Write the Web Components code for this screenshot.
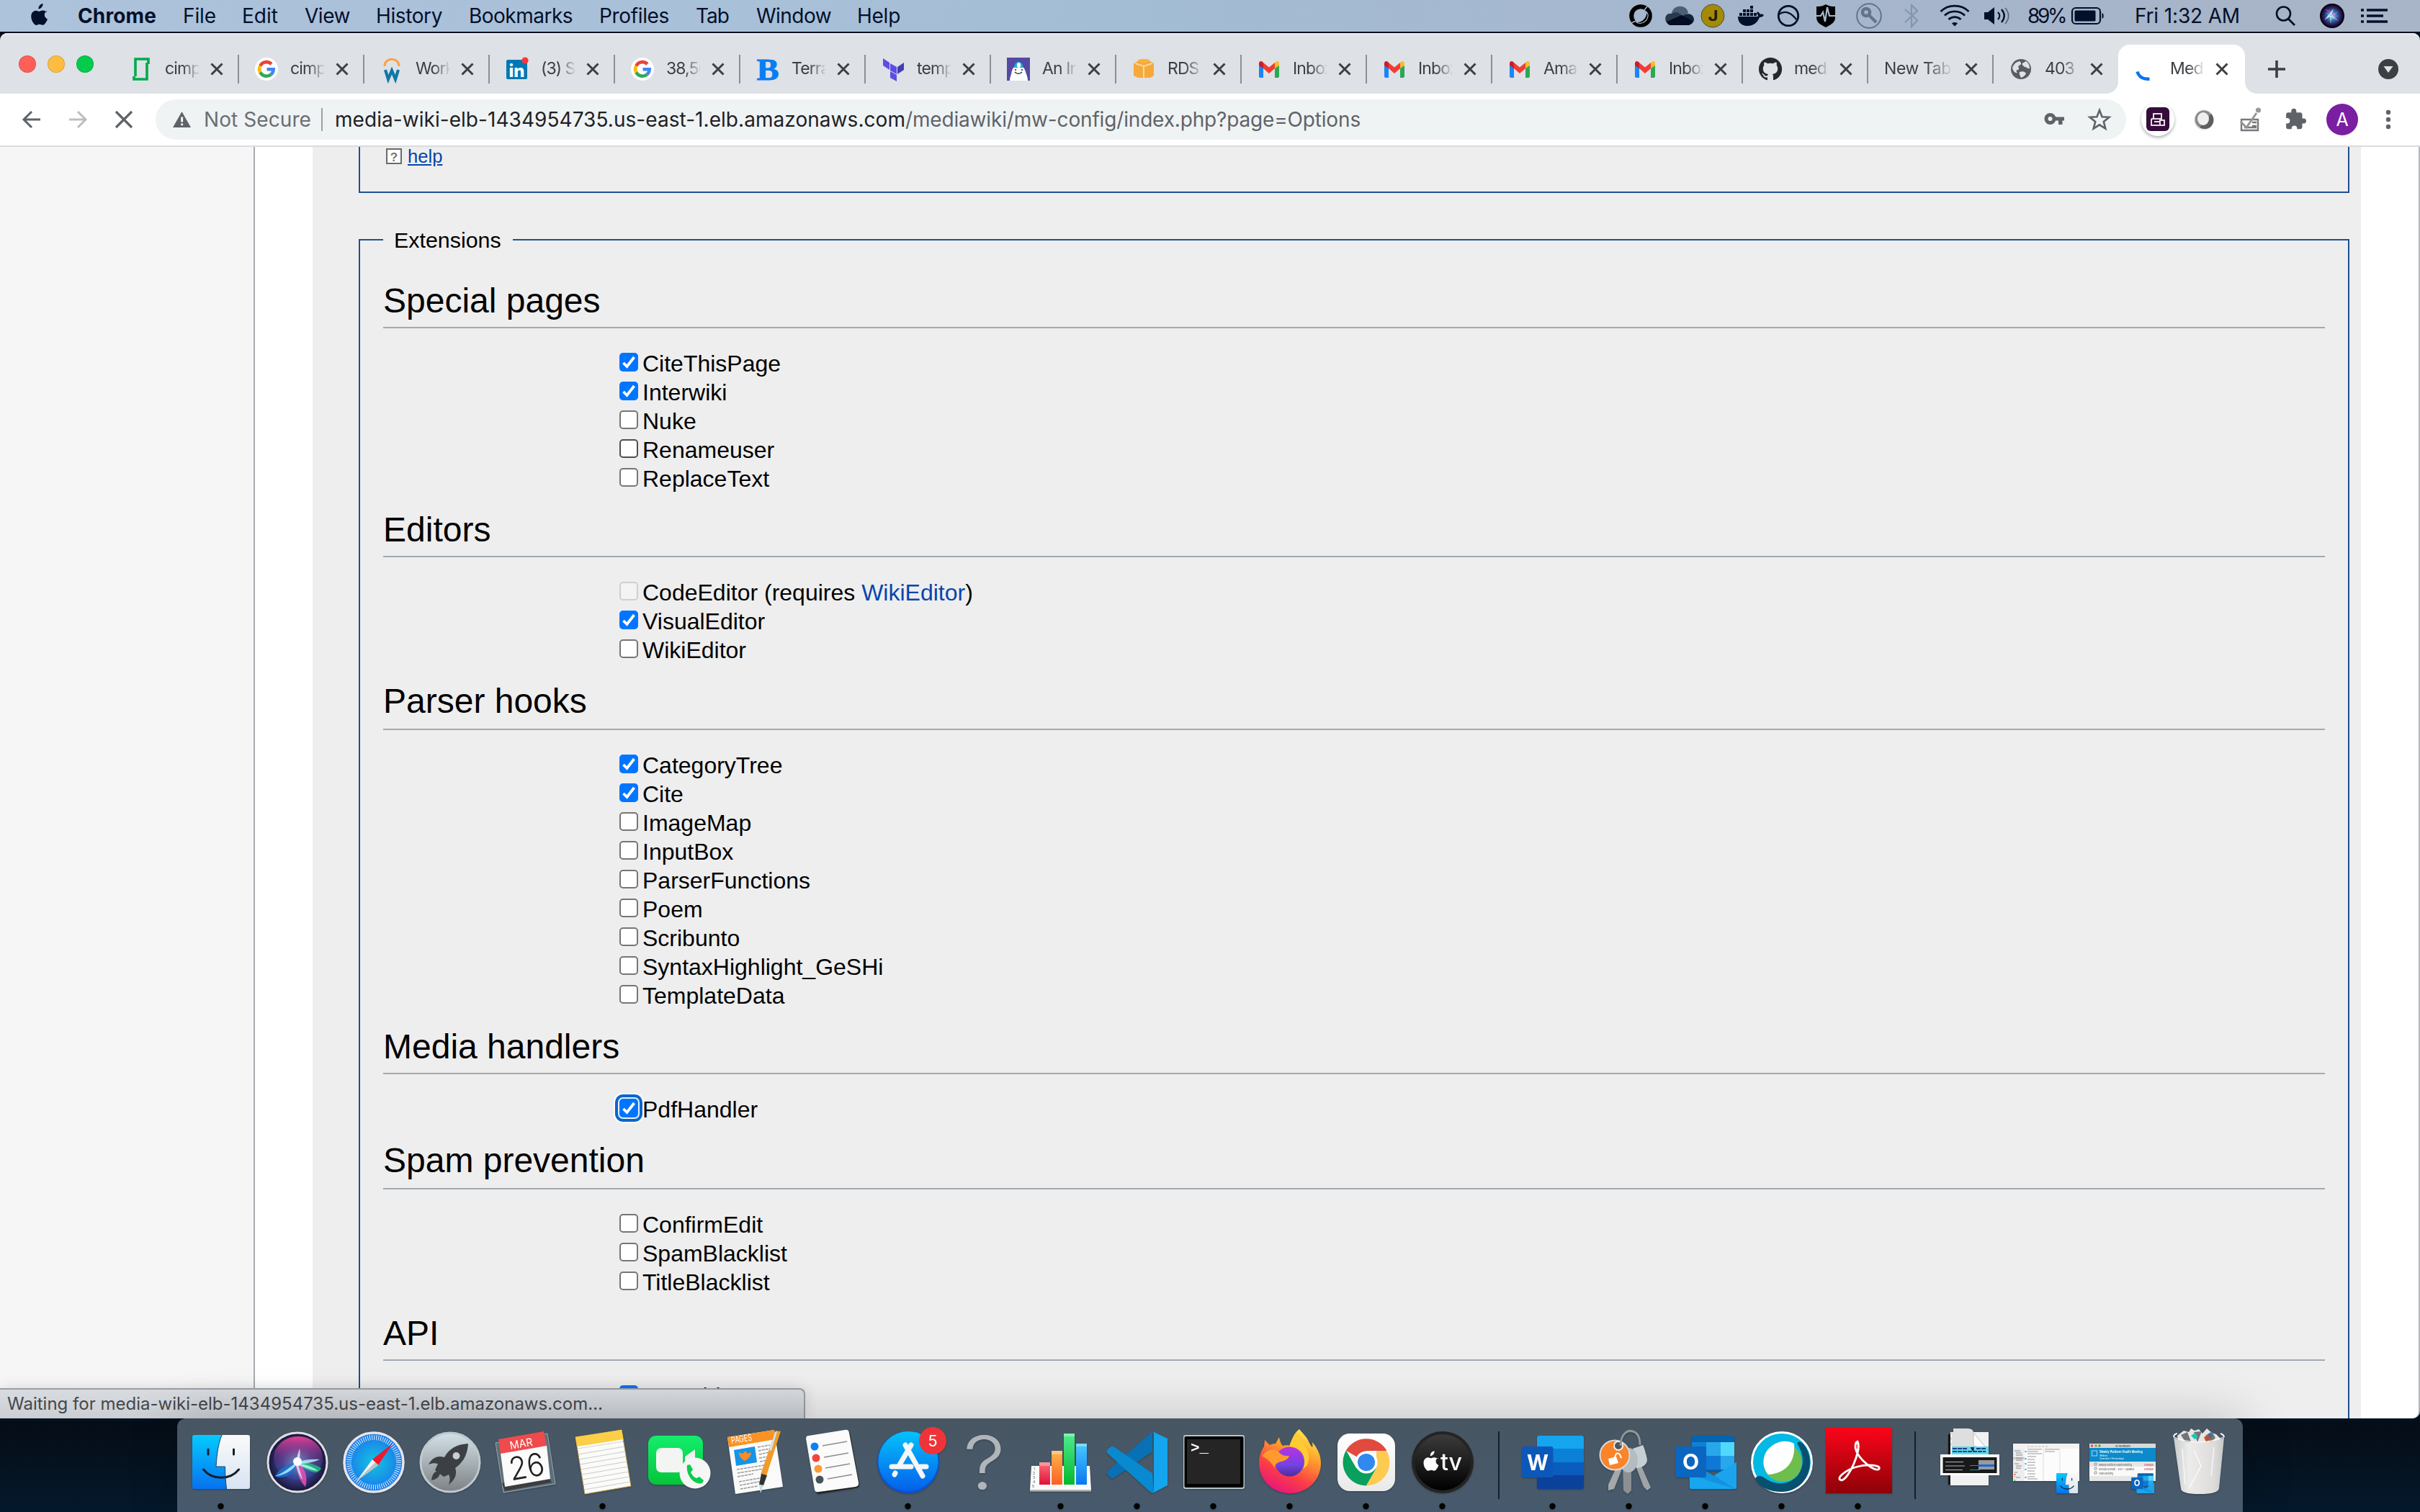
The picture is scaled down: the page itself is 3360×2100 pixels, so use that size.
<!DOCTYPE html>
<html lang="en">
<head>
<meta charset="utf-8">
<title>MediaWiki installation</title>
<style>
html,body{margin:0;padding:0;width:3360px;height:2100px;overflow:hidden;background:#04121f}
body{font-family:Inter,"Liberation Sans",sans-serif}
</style>
</head>
<body>
<mac-desktop></mac-desktop>
<script>
function define(name, html, setup){
  const t=document.createElement('template');t.innerHTML=html;
  customElements.define(name,class extends HTMLElement{
    connectedCallback(){
      if(this.shadowRoot)return;
      this.attachShadow({mode:'open'});
      this.shadowRoot.appendChild(t.content.cloneNode(true));
      if(setup)setup(this,this.shadowRoot);
    }
  });
}

/* Text set to an exact advance width through letter-spacing */
define('fit-text',`<style>:host{display:inline-block;white-space:pre}span{display:inline-block}</style><span><slot></slot></span>`,
  (h,r)=>{
    const w=+h.getAttribute('w');if(!w)return;
    const s=r.querySelector('span'),n=h.textContent.length;
    const nat=s.getBoundingClientRect().width;
    s.style.letterSpacing=((w-nat)/n)+'px';
  });

/* ---------- Menu bar ---------- */
define('mac-menubar',`<style>
:host{display:flex;height:44px;align-items:center;color:#03102a;font:400 28px/44px Inter,"Liberation Sans",sans-serif;
background:linear-gradient(90deg,#adc2db 0,#a9c0d9 30%,#a2bdd4 46%,#a5b9d0 60%,#a6b5cb 80%,#a8b4c7 100%);box-sizing:border-box}
b{font-weight:700}
svg{display:block;flex:none}
.m{display:flex}.m>*{flex:none}
.r{display:flex;margin-left:auto;align-items:center;height:44px}
</style>
<svg width="30" height="34" viewBox="0 0 30 34" style="margin-left:40px;margin-top:-4px"><path fill="#03102a" d="M19.6 2c.2 2-.6 3.800-1.700 5.100-1.100 1.400-2.900 2.400-4.500 2.300-.2-1.900.7-3.800 1.700-5C16.200 3 18.100 2.100 19.600 2zM25 12.200c-2 1.200-3.200 2.900-3.200 5.300 0 2.700 1.600 4.900 4.200 5.900-.6 1.900-1.500 3.600-2.600 5.200-1.100 1.600-2.300 3.200-4.100 3.200-1.800.1-2.400-1-4.500-1-2.100 0-2.700 1-4.500 1.100-1.700.1-3.100-1.700-4.200-3.300-2.300-3.300-4.100-9.400-1.700-13.500 1.200-2 3.300-3.300 5.500-3.400 1.800 0 3.400 1.200 4.500 1.200 1 0 3-1.500 5.200-1.300 2.200.1 4.100.9 5.400 2.600z"/></svg>
<div class="m">
<b style="margin-left:38px"><fit-text w="109">Chrome</fit-text></b>
<fit-text w="46" style="margin-left:37px">File</fit-text>
<fit-text w="50" style="margin-left:36px">Edit</fit-text>
<fit-text w="63" style="margin-left:37px">View</fit-text>
<fit-text w="92" style="margin-left:36px">History</fit-text>
<fit-text w="144" style="margin-left:37px">Bookmarks</fit-text>
<fit-text w="97" style="margin-left:37px">Profiles</fit-text>
<fit-text w="46" style="margin-left:37px">Tab</fit-text>
<fit-text w="104" style="margin-left:38px">Window</fit-text>
<fit-text w="60" style="margin-left:36px">Help</fit-text>
</div>
<div class="r">
<svg width="32" height="32" viewBox="0 0 32 32"><circle cx="16" cy="16" r="12.800" fill="none" stroke="#000" stroke-width="6"/><path d="M3 26l6-3M21 8l4-5" stroke="#a6b8ce" stroke-width="1.500"/><path d="M9 24c8 2 15-5 15-14l2 4c1 8-7 14-14 12z" fill="#000" stroke="#a6b8ce" stroke-width="1.200"/></svg>
<svg width="40" height="28" viewBox="0 0 40 28" style="margin-left:18px"><path d="M9 12C9-2 30-3 32 10l-13 7z" fill="#4c6073"/><path d="M8 27C-3 25-2 9 9 11c3-2 6-3 9-1l20 11c-2 4-4 6-8 6z" fill="#29394c"/><path d="M24 15c3-5 15-6 16 4 0 4-4 8-9 8z" fill="#12263a"/><path d="M2 22l21-9 15 8c-1 4-4 6-8 6H8c-3 0-5-2-6-5z" fill="#020c22"/></svg>
<svg width="34" height="34" viewBox="0 0 34 34" style="margin-left:9px"><circle cx="17" cy="17" r="16" fill="#a38a08" stroke="#50502c"/><text x="17.500" y="24" font-size="20" font-weight="700" text-anchor="middle" textLength="14" lengthAdjust="spacingAndGlyphs" fill="#201c0c">J</text></svg>
<svg width="38" height="30" viewBox="0 0 38 30" style="margin-left:17px"><path fill="#03102a" d="M1 16h27c1 0 1-1 1-2-2-1-2-3-1-5 2 1 3 2 4 4 2-1 4 0 5 1-1 2-3 3-6 3-3 8-9 12-17 12C6 29 1 24 1 16zM3 11h4v4H3zM8 11h4v4H8zM13 11h4v4h-4zM18 11h4v4h-4zM23 11h4v4h-4zM8 6h4v4H8zM13 6h4v4h-4zM18 6h4v4h-4zM18 1h4v4h-4z"/></svg>
<svg width="32" height="32" viewBox="0 0 32 32" style="margin-left:17px"><circle cx="16" cy="16" r="13.700" fill="none" stroke="#03102a" stroke-width="2.800"/><path d="M3 14c9-7 18-1 24 7" fill="none" stroke="#03102a" stroke-width="2.200"/></svg>
<svg width="28" height="34" viewBox="0 0 28 34" style="margin-left:22px"><path d="M14 1c5 3 9 3 13 3v15c0 7-5 10-13 14C6 29 1 26 1 19V4c4 0 8 0 13-3z" fill="#000"/><path d="M0 17h7l3-5 3 13 3-20 3 12h9" fill="none" stroke="#a6b7cc" stroke-width="2.200"/></svg>
<svg width="36" height="36" viewBox="0 0 36 36" style="margin-left:28px"><g fill="none" stroke="#62758b"><circle cx="18" cy="18" r="16.800" stroke-width="2"/><circle cx="14" cy="13" r="5" stroke-width="4.500"/><path d="M17 16l11 11" stroke-width="4"/></g></svg>
<svg width="20" height="34" viewBox="0 0 20 34" style="margin-left:31px"><path d="M1 8l17 15-8 9V2l8 8L1 26" fill="none" stroke="#8496ab" stroke-width="2.200"/></svg>
<svg width="42" height="32" viewBox="0 0 42 32" style="margin-left:29px"><g fill="none" stroke="#03102a" stroke-width="2.900"><path d="M1.500 10C12-.5 30-.5 40.500 10"/><path d="M7 15.500c7.500-7.500 20.500-7.500 28 0"/><path d="M12.500 21c5-4.500 12-4.500 17 0"/></g><path d="M17 26.500c2-2 6-2 8 0l-4 4z" fill="#03102a"/></svg>
<svg width="36" height="30" viewBox="0 0 36 30" style="margin-left:19px"><path d="M1 10h5l9-7v24l-9-7H1z" fill="#03102a"/><path d="M20 10c3 3 3 7 0 10M25 6c5 6 5 12 0 18" fill="none" stroke="#03102a" stroke-width="2.300"/><path d="M30 4c6 7 6 15 0 22" fill="none" stroke="#5a6b83" stroke-width="1.800"/></svg>
<fit-text w="52" style="margin-left:25px">89%</fit-text>
<svg width="48" height="26" viewBox="0 0 48 26" style="margin-left:8px"><rect x="2" y="2" width="39" height="22" rx="5" fill="none" stroke="#03102a" stroke-width="2.200"/><rect x="5.500" y="5.500" width="29" height="15" rx="1.500" fill="#03102a"/><path d="M43.500 9c3 1 3 7 0 8z" fill="#03102a"/></svg>
<fit-text w="146" style="margin-left:41px">Fri 1:32 AM</fit-text>
<svg width="30" height="30" viewBox="0 0 30 30" style="margin-left:48px"><circle cx="12.500" cy="12" r="9.500" fill="none" stroke="#03102a" stroke-width="2.600"/><path d="M19 19l9 9" stroke="#03102a" stroke-width="2.800"/></svg>
<svg width="34" height="34" viewBox="0 0 34 34" style="margin-left:33px"><defs><radialGradient id="s"><stop offset="0" stop-color="#e9fbff"/><stop offset=".35" stop-color="#3487b5"/><stop offset=".7" stop-color="#33226b"/><stop offset="1" stop-color="#07071f"/></radialGradient></defs><circle cx="17" cy="17" r="16" fill="url(#s)" stroke="#03030f" stroke-width="2"/><path d="M7 8c8 1 12 5 18 10-4 1-8 0-10-4zM8 26c6-2 9-8 8-18 5 6 4 13-8 18z" fill="#ca4fc4" opacity=".65"/><path d="M6 23l21-13-10 7 10 8-11-7-1 11-1-13-7-4 9 4 3-9z" fill="#bff" opacity=".85"/></svg>
<svg width="40" height="24" viewBox="0 0 40 24" style="margin:0 43px 0 22px"><path d="M9 4h29M9 12h23M9 20h29M1 4h4M1 12h4M1 20h4" stroke="#03102a" stroke-width="3.600"/></svg>
</div>`);

/* ---------- Favicons ---------- */
const gmail='<path d="M2 26V10l6 4v14H4c-1 0-2-1-2-2z" fill="#1a86f8"/><path d="M24 28V14l6-4v16c0 1-1 2-2 2z" fill="#29a952"/><path d="M2 11V8c0-3 3-4 5-2l1 1v8z" fill="#cc1d26"/><path d="M24 7l1-1c2-2 5-1 5 2v3l-6 4z" fill="#fdbb2c"/><path d="M8 7l8 6.500L24 7v8l-8 7-8-7z" fill="#f33b34"/>';
const google='<circle cx="16" cy="16" r="16" fill="#fff"/><g fill="none" stroke-width="4.600"><path d="M7.300 11.500A9.800 9.800 0 0 1 22.900 9" stroke="#ea4335"/><path d="M7.300 11.500a9.800 9.800 0 0 0 0 9" stroke="#fbbc05"/><path d="M7.300 20.500A9.800 9.800 0 0 0 22.500 23.300" stroke="#34a853"/><path d="M16.500 16.300h9.200a9.800 9.800 0 0 1-3.200 7" stroke="#4285f4"/></g>';
const fav={
 j:'<path d="M8 26V2h18v7M24 7v23H6v-4" fill="none" stroke="#00ab4b" stroke-width="3.600"/>',
 google,
 w:'<path d="M6 12C6-1 26-1 26 12" fill="none" stroke="#ffa040" stroke-width="3"/><path d="M7 17l4 13 5-12 5 12 4-13" fill="none" stroke="#1077a8" stroke-width="4.200"/>',
 in:'<rect x="1" y="3" width="29" height="27" rx="2" fill="#0077b5"/><text x="15.500" y="26.500" font-size="24" font-weight="800" text-anchor="middle" textLength="22" lengthAdjust="spacingAndGlyphs" fill="#fff">in</text><circle cx="27" cy="4" r="4.600" fill="#f5393d"/>',
 b:'<text x="16" y="31" font-size="43" font-family="Liberation Serif,serif" font-weight="700" text-anchor="middle" textLength="31" lengthAdjust="spacingAndGlyphs" fill="#0a7df2" stroke="#0a7df2">B</text>',
 tf:'<path d="M2 1l9 6v10l-9-6z" fill="#5c4ee5"/><path d="M12 8l9 5v10l-9-5z" fill="#5c4ee5"/><path d="M22 13l9-6v10l-9 6z" fill="#4040b2"/><path d="M12 19l9 5v9l-9-5z" fill="#5c4ee5"/>',
 an:'<path d="M0 0h32v32H0z" fill="#5549a5"/><path d="M16 11c-8 0-9 7-10 12-1 3-2 5-2 9h25c0-4-1-6-2-9-2-6-3-12-11-12z" fill="#fff"/><path d="M10 14c1-11 11-11 13 0z" fill="#18aee0"/><ellipse cx="16.500" cy="10.500" rx="2.600" ry="3.500" fill="#fff"/><circle cx="12" cy="17" r="1" fill="#222"/><circle cx="21" cy="17" r="1" fill="#222"/><path d="M11 20c3 3 7 3 10 0" fill="none" stroke="#222" stroke-width="1.300"/>',
 rds:'<path d="M2 8l6-3h17l5 3v17l-5 3H8l-6-3z" fill="#f5a93a"/><path d="M7 4c4-3 14-3 18 0l-9 4z" fill="#f9b13f"/><path d="M4 8l12 4 12-4M16 12v18" fill="none" stroke="#fad7a1" stroke-width="2"/>',
 gmail,
 gh:'<path d="M16 0a16 16 0 0 0-5 31.200c.8.100 1-.4 1-.8v-3c-4.500 1-5.400-2-5.400-2-.8-1.800-1.800-2.300-1.800-2.300-1.400-1 .1-1 .1-1 1.600.1 2.500 1.700 2.500 1.700 1.400 2.500 3.700 1.800 4.700 1.300.1-1 .6-1.700 1-2.100-3.600-.4-7.300-1.800-7.300-7.900 0-1.800.6-3.200 1.600-4.300-.1-.4-.7-2 .2-4.200 0 0 1.400-.4 4.400 1.700a15 15 0 0 1 8 0c3-2.100 4.400-1.700 4.400-1.700.9 2.200.3 3.800.2 4.200 1 1.100 1.600 2.500 1.600 4.300 0 6.100-3.700 7.500-7.300 7.900.6.500 1.100 1.500 1.100 3v4.400c0 .4.300.9 1.100.8A16 16 0 0 0 16 0z" fill="#24292e"/>',
 globe:'<circle cx="16" cy="16" r="14" fill="#5a5d61"/><path d="M4 14c2-5 5-8 10-9 3 2 3 5-1 6-2 3 2 4-1 6-3 0-3 2-1 4-3 1-6-2-7-7zM18 8l5-3c4 3 5 6 5 10-3 1-4-2-7-2-2-2-4-3-3-5zM14 20c5-2 8 0 9 2-1 3-4 5-7 6-1-3-3-5-2-8z" fill="#dee1e6"/>',
 spin:'<path d="M3.500 19.500c2 7 8 11 17 10" fill="none" stroke="#0b75ec" stroke-width="4.500"/>'
};
define('chrome-tab',`<style>
:host{display:flex;width:174px;height:68px;box-sizing:border-box;padding-left:23px;align-items:center;position:relative;flex:none;color:#3c4043;font:400 23px/68px Inter,sans-serif}
:host([active]){background:#fff;border-radius:16px 16px 0 0;width:176px;padding-right:2px}
:host([active])::before,:host([active])::after{content:"";position:absolute;bottom:0;width:16px;height:16px}
:host([active])::before{left:-16px;background:radial-gradient(circle at 0 0,transparent 15.500px,#fff 16px)}
:host([active])::after{right:-16px;background:radial-gradient(circle at 100% 0,transparent 15.500px,#fff 16px)}
.i{width:32px;height:32px;flex:none;margin-right:17px;overflow:visible}
.t{flex:1;height:68px;overflow:hidden;white-space:nowrap;-webkit-mask:linear-gradient(90deg,#000 52%,transparent 104%);mask:linear-gradient(90deg,#000 52%,transparent 104%);margin-top:-2px;letter-spacing:-.9px}
:host([wide]) .t{letter-spacing:-.4px;-webkit-mask:linear-gradient(90deg,#000 60%,transparent 100%);mask:linear-gradient(90deg,#000 60%,transparent 100%)}
.x{width:20px;height:20px;flex:none;margin:0 19px 0 15px}
.s{width:2px;height:40px;background:#8c9095;margin-right:-1px}
:host([active]) .s,:host([last]) .s{visibility:hidden}
</style><svg class="i" viewBox="0 0 32 32"></svg><div class="t"><slot></slot></div><svg class="x" viewBox="0 0 20 20"><path d="M2.500 2.500l15 15M17.500 2.500l-15 15" stroke="#3c4043" stroke-width="3"/></svg><div class="s"></div>`,
 (h,r)=>{const k=h.getAttribute('icon');const i=r.querySelector('.i');if(k)i.innerHTML=fav[k];else i.remove();});

define('chrome-tabstrip',`<style>
:host{display:flex;height:84px;background:#dee1e6;align-items:flex-end;border-radius:10px 10px 0 0;box-shadow:inset 0 2px #eceef1}
.l{display:flex;gap:16px;padding-left:26px;width:131px;box-sizing:border-box;height:82px;align-items:center}
.l i{width:24px;height:24px;border-radius:50%;box-sizing:border-box;border:1px solid #0002}
.plus{width:28px;height:28px;margin:0 0 20px 30px}
.dn{width:28px;height:28px;margin:0 30px 20px auto}
</style>
<div class="l"><i style="background:#fe5f57"></i><i style="background:#febc40"></i><i style="background:#05cb4c"></i></div>
<div style="width:26px"></div>
<chrome-tab icon="j">cimpress</chrome-tab><chrome-tab icon="google">cimpress</chrome-tab><chrome-tab icon="w">Workday</chrome-tab><chrome-tab icon="in">(3) Software</chrome-tab><chrome-tab icon="google">38,500</chrome-tab><chrome-tab icon="b">Terraform</chrome-tab><chrome-tab icon="tf">template</chrome-tab><chrome-tab icon="an">An Introduction</chrome-tab><chrome-tab icon="rds">RDS</chrome-tab><chrome-tab icon="gmail">Inbox</chrome-tab><chrome-tab icon="gmail">Inbox</chrome-tab><chrome-tab icon="gmail">Amazon</chrome-tab><chrome-tab icon="gmail">Inbox</chrome-tab><chrome-tab icon="gh">mediawiki</chrome-tab><chrome-tab wide>New Tab</chrome-tab><chrome-tab icon="globe" last>403</chrome-tab><chrome-tab icon="spin" active>MediaWiki</chrome-tab>
<svg class="plus" viewBox="0 0 28 28"><path d="M14 2v24M2 14h24" stroke="#3c4043" stroke-width="3.600"/></svg>
<svg class="dn" viewBox="0 0 28 28"><circle cx="14" cy="14" r="14" fill="#3c4043"/><path d="M7.500 10h13L14 19z" fill="#dee1e6"/></svg>`);

/* ---------- Toolbar ---------- */
define('chrome-toolbar',`<style>
:host{display:flex;height:74px;box-sizing:border-box;background:#fff;border-bottom:2px solid #dadce0;padding:0 20px;align-items:center;gap:16px;font:400 28px/56px Inter,sans-serif;color:#5f6368}
svg{display:block;flex:none}
.o{flex:1;display:flex;align-items:center;height:56px;border-radius:28px;background:#eff3f4;margin:0 4px;padding-left:24px;white-space:nowrap}
.v{width:2px;height:32px;background:#9aa0a6;margin:0 17px 0 14px}
b{font-weight:400;color:#202124}
</style>
<svg width="48" height="48" viewBox="0 0 48 48"><path d="M36 24H13M24 13L13 24l11 11" fill="none" stroke="#5f6368" stroke-width="3"/></svg>
<svg width="48" height="48" viewBox="0 0 48 48"><path d="M12 24h23M24 13l11 11-11 11" fill="none" stroke="#bcbfc2" stroke-width="3"/></svg>
<svg width="48" height="48" viewBox="0 0 48 48"><path d="M13 13l22 22M35 13L13 35" stroke="#5f6368" stroke-width="3.200"/></svg>
<div class="o">
<svg width="26" height="24" viewBox="0 0 26 24"><path d="M12.500 1L25 23H0z" fill="#5f6368"/><path d="M11.300 8.500h2.800v7h-2.800zM11.300 17.500h2.800v2.800h-2.800z" fill="#fff"/></svg>
<fit-text w="149" style="margin-left:17px;color:#6a6e73">Not Secure</fit-text><div class="v"></div>
<b><fit-text w="792">media-wiki-elb-1434954735.us-east-1.elb.amazonaws.com</fit-text></b><fit-text w="632">/mediawiki/mw-config/index.php?page=Options</fit-text>
<svg width="30" height="24" viewBox="0 0 30 24" style="margin-left:auto"><circle cx="9.500" cy="11" r="5.500" fill="none" stroke="#5f6368" stroke-width="5"/><path d="M14 8.500h15v5h-2.500V19H21v-5.500h-7z" fill="#5f6368"/></svg>
<svg width="34" height="34" viewBox="0 0 34 34" style="margin:0 20px 0 31px"><path d="M17 4l3.600 9.200 9.900.6-7.700 6.300 2.500 9.600L17 24.300l-8.300 5.400 2.500-9.600-7.700-6.300 9.900-.6z" fill="none" stroke="#5f6368" stroke-width="2.600"/></svg>
</div>
<svg width="48" height="56" viewBox="0 0 48 56" style="overflow:visible"><circle cx="24" cy="28" r="23" fill="#fff" style="filter:drop-shadow(0 2px 2px #0005)"/><rect x="8" y="11" width="32" height="33" rx="6" fill="#360c38"/><g fill="none" stroke="#e8dce9" stroke-width="2"><path d="M18 20h11v7H18zM15 27h15M15 27v9h13M19 31h7"/><path d="M27 29h6v7h-6z"/></g></svg>
<svg width="48" height="48" viewBox="0 0 48 48"><ellipse cx="24" cy="24.500" rx="13.500" ry="14" fill="#ddd"/><ellipse cx="24" cy="24" rx="12.500" ry="12.500" fill="#8a8a8a"/><path d="M34 16a12.500 12.500 0 0 1-16 19z" fill="#5e5e5e"/><ellipse cx="23" cy="23" rx="8" ry="9" fill="#eee"/></svg>
<svg width="48" height="48" viewBox="0 0 48 48"><g fill="none" stroke="#76797c" stroke-width="2.400"><path d="M12 24h23v15H12zM27 28h6M27 33h6M16 35h17"/><path d="M11 27l8 8L33 15" stroke="#969696" stroke-width="3"/></g><circle cx="35.500" cy="11" r="3.600" fill="#999"/></svg>
<svg width="48" height="48" viewBox="0 0 48 48"><path d="M34.500 22.500h-2V17c0-1.500-1.200-2.700-2.700-2.700h-5.500v-2a3.500 3.500 0 0 0-7 0v2h-4.500c-1.500 0-2.700 1.200-2.700 2.700v5h1.500a3.800 3.800 0 0 1 0 7.600h-1.500v5c0 1.500 1.200 2.700 2.700 2.700h5v-1.500a3.800 3.800 0 0 1 7.500 0v1.500h4.500c1.500 0 2.700-1.200 2.700-2.700v-5h2a3.500 3.500 0 0 0 0-7z" fill="#5f6368"/></svg>
<svg width="48" height="48" viewBox="0 0 48 48"><circle cx="24" cy="24" r="22" fill="#7b1fa2"/><text x="24" y="33" font-size="25" text-anchor="middle" fill="#fff">A</text></svg>
<svg width="48" height="48" viewBox="0 0 48 48" fill="#5f6368"><circle cx="24" cy="14" r="3.200"/><circle cx="24" cy="24" r="3.200"/><circle cx="24" cy="34" r="3.200"/></svg>`);

/* ---------- Wiki page ---------- */
define('ext-item',`<style>
:host{display:flex;height:40px;padding-left:328px;font:400 32px/42px "Liberation Sans",Arial,sans-serif;color:#000}
.c{width:26px;height:26px;box-sizing:border-box;margin:6px 6px 0 0;flex:none;border:2px solid #767676;border-radius:5px;background:#fff}
:host([checked]) .c{border:0;background:#0075ff}
:host([hover]) .c{border-color:#4f4f4f}
:host([disabled]) .c{border-color:#d0d0d0;background:#f3f3f3}
:host([focus]) .c{box-shadow:0 0 0 2px #e9f1fa,0 0 0 6px #0a66cc,0 0 0 8px #fff}
svg{display:none}:host([checked]) svg{display:block}
::slotted(a){color:#0645ad}
.t{white-space:nowrap;position:relative}
</style><div class="c"><svg width="26" height="26" viewBox="0 0 26 26"><path d="M5.500 14l5 5L20.500 6" fill="none" stroke="#fff" stroke-width="3.800"/></svg></div><div class="t"><slot></slot></div>`);

define('ext-section',`<style>
:host{display:block}
h2{margin:0;padding-top:25px;box-sizing:border-box;height:calc(var(--h,88px) + 2px);font:400 48px/53px "Liberation Sans",Arial,sans-serif;border-bottom:2px solid #a2a9b1}
.l{padding-top:28px}
</style><h2></h2><div class="l"><slot></slot></div>`,(h,r)=>{
 r.querySelector('h2').textContent=h.getAttribute('name');
 h.style.setProperty('--h',(h.getAttribute('h')||88)+'px');
});

define('wiki-page',`<style>
:host{display:flex;height:1766px;background:#fff;overflow:hidden;position:relative;border-right:2px solid #b5b7ba;border-radius:0 0 10px 0;box-sizing:border-box}
.side{width:352px;background:#f6f6f6;border-right:2px solid #a7aaae;margin-right:80px;flex:none}
.main{width:2844px;flex:none;background:#eee;padding-left:64px;box-sizing:border-box;font-family:"Liberation Sans",Arial,sans-serif}
.top{width:2764px;height:64px;box-sizing:border-box;border:solid #1f4f8f;border-width:0 2px 2px;display:flex;padding-left:36px;font-size:25.600px;line-height:30px;gap:8px}
.top svg{margin-top:2px}.top a{color:#0645ad;text-decoration:underline;margin-top:-2px}
fieldset{margin:48px 0 0;width:2764px;height:1700px;box-sizing:border-box;border:2px solid #1f4f8f;padding:16px 32px 0;min-width:0}
legend{font-size:30.400px;line-height:34px;padding:0 16px 0 15px}
.status{position:absolute;left:0;bottom:0;width:1118px;height:42px;box-sizing:border-box;border:solid #9a9da1;border-width:2px 2px 0 0;border-radius:0 8px 0 0;background:linear-gradient(#d8dbe0,#cbced3);color:#44484c;font:400 24px/40px Inter,sans-serif;padding-left:10px;box-shadow:0 0 20px #0002}
a{text-decoration:none}
</style>
<div class="side"></div>
<div class="main">
<div class="top"><svg width="22" height="22" viewBox="0 0 22 22"><rect x="1" y="1" width="20" height="20" fill="#fff" stroke="#6b6b6b" stroke-width="2"/><text x="11" y="17.500" font-size="17" font-weight="700" text-anchor="middle" fill="#777">?</text></svg><a>help</a></div>
<fieldset><legend>Extensions</legend>
<ext-section name="Special pages"><ext-item checked>CiteThisPage</ext-item><ext-item checked>Interwiki</ext-item><ext-item>Nuke</ext-item><ext-item hover>Renameuser</ext-item><ext-item>ReplaceText</ext-item></ext-section>
<ext-section name="Editors"><ext-item disabled>CodeEditor (requires <a>WikiEditor</a>)</ext-item><ext-item checked>VisualEditor</ext-item><ext-item>WikiEditor</ext-item></ext-section>
<ext-section name="Parser hooks" h="90"><ext-item checked>CategoryTree</ext-item><ext-item checked>Cite</ext-item><ext-item>ImageMap</ext-item><ext-item>InputBox</ext-item><ext-item>ParserFunctions</ext-item><ext-item>Poem</ext-item><ext-item>Scribunto</ext-item><ext-item>SyntaxHighlight_GeSHi</ext-item><ext-item>TemplateData</ext-item></ext-section>
<ext-section name="Media handlers"><ext-item checked focus>PdfHandler</ext-item></ext-section>
<ext-section name="Spam prevention" h="90"><ext-item>ConfirmEdit</ext-item><ext-item>SpamBlacklist</ext-item><ext-item>TitleBlacklist</ext-item></ext-section>
<ext-section name="API"><ext-item checked>Parsoid</ext-item></ext-section>
</fieldset></div>
<div class="status"><fit-text w="827">Waiting for media-wiki-elb-1434954735.us-east-1.elb.amazonaws.com…</fit-text></div>`);

/* ---------- Dock ---------- */
const finder=`<linearGradient id="fb" x2="0" y2="1"><stop stop-color="#04cbff"/><stop offset="1" stop-color="#0672f0"/></linearGradient><linearGradient id="fw" x2="0" y2="1"><stop stop-color="#fafafa"/><stop offset="1" stop-color="#d8e4f2"/></linearGradient><rect x="13" y="23" width="80" height="75" rx="3" fill="url(#fb)"/><path d="M54 23h36q3 0 3 3v69q0 3-3 3H60.500c-1-9-2-20-2-31H46c1-18 3-31 8-44z" fill="url(#fw)"/><path d="M54 23c-5 13-7 26-8 44h12.500c0 11 1 22 2 31" fill="none" stroke="#1b4560" stroke-width="1"/><path d="M35 43v7M70.500 43v7M28.500 71c12 15 37 15 49 0" fill="none" stroke="#14202b" stroke-width="3" stroke-linecap="round"/>`;
const outlook=`<path d="M34 27q0-3 3-3h53q3 0 3 3v46H34z" fill="#0464b0"/><path d="M34 33h20v28H34z" fill="#0f80d6"/><path d="M54 33h20v19H54z" fill="#28a8ea"/><path d="M74 33h19v19H74z" fill="#50d9ff"/><path d="M54 52h20v19H54z" fill="#0f78d4"/><path d="M74 52h19v19H74z" fill="#28a8ea"/><path d="M31 60l34 20 31-19v34q0 3-3 3H34q-3 0-3-3z" fill="#1292e0"/><path d="M65 79l31-18v34q0 2-2 3z" fill="#1aa4ee"/><path d="M31 78v17q0 3 3 3h60z" fill="#18a6ee"/><rect x="11" y="39" width="43" height="43" rx="3" fill="#0b66c0"/><text x="32.500" y="71" font-size="30" font-weight="700" text-anchor="middle" fill="#fff">O</text>`;
const D={
finder,
siri:`<radialGradient id="a" cx=".5" cy=".5" r=".5"><stop offset="0" stop-color="#6bc0dc"/><stop offset=".5" stop-color="#43408c"/><stop offset="1" stop-color="#14153a"/></radialGradient><linearGradient id="b" x2="0" y2="1"><stop stop-color="#e43e93"/><stop offset=".5" stop-color="#7b3a90" stop-opacity=".4"/><stop offset="1" stop-color="#0b6ad0" stop-opacity=".3"/></linearGradient><circle cx="53" cy="61" r="41" fill="url(#a)" stroke="#dfdfe2" stroke-width="3"/><ellipse cx="54" cy="55" rx="34" ry="30" fill="url(#b)"/><path d="M53 60c-14 4-27 10-31 21 14 4 26-5 32-20z" fill="#1576d6" opacity=".8"/><path d="M54 60c12 0 24 4 32 9-4 11-19 6-32-8z" fill="#1fc07a" opacity=".8"/><path d="M50 61c2 14 6 26 14 34 4-12 0-26-12-35z" fill="#ee4db2" opacity=".85"/><path d="M22 80c10-3 20-12 30-19 10-4 23-5 32-4-9 4-20 6-28 6 10 1 20 5 26 10-10-1-20-5-27-8-2 0 4 14 5 20-5-6-7-13-9-20-6 8-18 15-29 15z" fill="#c4ffff" opacity=".75"/><path d="M52 59c0-6 2-12 4-17 1 6 1 12-1 17z" fill="#fff" opacity=".7"/><circle cx="53" cy="60" r="6" fill="#fff"/>`,
safari:`<radialGradient id="a"><stop stop-color="#14c5e0"/><stop offset="1" stop-color="#1a75ec"/></radialGradient><circle cx="53" cy="61" r="41" fill="url(#a)" stroke="#e6e6e8" stroke-width="3.500"/><circle cx="53" cy="61" r="34.500" fill="none" stroke="#dff3ff" stroke-width="7" stroke-dasharray="1 2.010"/><path d="M79 35L51 57l8 8z" fill="#f0182c"/><path d="M29 87l22-30 8 8z" fill="#f3f3f3"/><path d="M29 87l26-26 4 4z" fill="#b9c3c6"/>`,
rocket:`<linearGradient id="a" x2="0" y2="1"><stop stop-color="#d3e2e8"/><stop offset="1" stop-color="#7d8185"/></linearGradient><circle cx="53" cy="61" r="41" fill="url(#a)" stroke="#bfc9ce" stroke-width="3"/><path d="M78 35c-17 1-27 8-33 19-10-3-17 1-22 10 5-2 9-2 13-1l-4 9 12 9c3-1 5-2 7-3 2 4 2 8 0 14 9-7 12-15 9-23 11-8 17-18 18-34zM36 73c-6 1-8 6-9 13 6-1 11-4 12-10z" fill="#3c3f43"/><circle cx="61.500" cy="52" r="5" fill="#c5d0d5"/>`,
cal:`<path d="M10 34l72-13 11 70-72 12z" fill="#5d7079" stroke="#9aa8ae"/><path d="M19 90l64-11 5 10-65 12z" fill="#3c3d3f"/><path d="M17 48l64-11 5 47-63 11z" fill="#fbfbfb"/><path d="M14 29l63-11 4 20-64 11z" fill="#f04a4c"/><g transform="rotate(-10 50 60)" text-anchor="middle"><text x="50" y="40" font-size="15" textLength="32" lengthAdjust="spacingAndGlyphs" fill="#fff">MAR</text><text x="52" y="83" font-size="44" textLength="49" lengthAdjust="spacingAndGlyphs" font-weight="300" fill="#222">26</text></g>`,
notes:`<path d="M15 26l64-10 13 78-64 11z" fill="#fbfbf8" stroke="#c9a550"/><path d="M15 26l64-10 2.500 13-64 10z" fill="#fbcf46"/><path d="M18 42l64-10" stroke="#999" stroke-dasharray="1 1.500"/><path d="M19 50l64-11M20 57l64-11M21 64l64-11M22 71l64-11M24 78l64-11M25 85l64-11M26 92l64-11M27 99l64-11" stroke="#c9ccd0" stroke-width="1.200"/>`,
facetime:`<linearGradient id="a" x2="0" y2="1"><stop stop-color="#12ee6c"/><stop offset="1" stop-color="#05c43a"/></linearGradient><rect x="10" y="24" width="76" height="68" rx="11" fill="url(#a)"/><rect x="21" y="41" width="37" height="34" rx="7" fill="#f3f5f3"/><path d="M61 53l14-10v25H61z" fill="#eef2ee"/><circle cx="75" cy="76" r="21.500" fill="#f5f6f5"/><path d="M64 65l4-1 4 7-3 4c2 4 5 7 8 8l4-2 6 5-2 4c-12 3-23-12-21-25z" fill="#08ce4c"/>`,
pages:`<path d="M14 26l65-10 12 79-66 10z" fill="#fafafa"/><path d="M14 26l65-10 2 13-65 11z" fill="#fb9225"/><text transform="rotate(-9 20 36)" x="20" y="35" font-size="13" textLength="29" lengthAdjust="spacingAndGlyphs" fill="#fff">PAGES</text><path d="M23 44l29-5 3 22-29 5z" fill="#1594e8"/><path d="M38 59c-6-3-8-8-8-12l5 2 4-4 3 4 5-2c0 5-3 9-9 12z" fill="#fb8a22"/><path d="M56 40l17-3M57 45l16-3M58 50l14-3M58 55l13-2M59 60l11-2M27 71l38-6M28 76l36-6M28 81l22-4M30 88l34-6M31 93l32-6M32 98l24-4" stroke="#9a9a9a" stroke-width="1.500" stroke-dasharray="4 1"/><path d="M81 17l7 1-20 62-8-2z" fill="#f39a2b"/><path d="M83 18l-8 27-3-1 8-25z" fill="#cbe6f2"/><path d="M61 77l8 2-5 14-6-1z" fill="#303234"/><path d="M58 92l6 1-4 11z" fill="#c9dce4"/>`,
reminders:`<path d="M20 28q0-4 4-4l49-8q4 0 5 3l13 70q1 5-4 6l-50 8q-5 1-6-3z" fill="#222" transform="translate(0 1.500)"/><path d="M17 28q0-4 4-4l50-8q5-1 6 4l13 69q1 5-4 6l-51 7q-5 1-6-3z" fill="#fbfbfb"/><circle cx="29" cy="39" r="5.500" fill="#0a80f5"/><circle cx="31" cy="55" r="5.500" fill="#f3443f"/><circle cx="34" cy="70" r="5.500" fill="#fb9a36"/><circle cx="36" cy="85" r="5.500" fill="#49525a"/><path d="M40 38l34-6M42 54l34-6M44 69l34-6M47 84l34-6" stroke="#8d8d8d" stroke-width="1.400"/>`,
appstore:`<linearGradient id="a" x2="0" y2="1"><stop stop-color="#04c2fb"/><stop offset="1" stop-color="#0460ea"/></linearGradient><circle cx="53" cy="61" r="43" fill="#0a55d6"/><circle cx="53" cy="59.500" r="41.500" fill="url(#a)"/><g stroke="#f4f6f8" stroke-width="7" stroke-linecap="round"><path d="M57 37L40 66M35 76l-1 2M49 37l24 43M30 67h27M70 67h8"/></g><circle cx="87" cy="31" r="19" fill="#ef3439"/><text x="87" y="39" font-size="22" text-anchor="middle" fill="#fff">5</text>`,
q:`<text x="52.500" y="98" font-size="102" font-weight="300" text-anchor="middle" textLength="58" lengthAdjust="spacingAndGlyphs" font-family="Inter,Lato,sans-serif" fill="#b0b5ba">?</text>`,
numbers:`<path d="M12 66h81l2 33v2H10v-2z" fill="#fafafa"/><path d="M10 99h85v2.500H10z" fill="#b5b5b5"/><g font-size="5" fill="#666"><text x="15" y="72">1</text><text x="14" y="78">2</text><text x="14" y="84">3</text><text x="14" y="90">4</text><text x="13" y="96">5</text></g><linearGradient id="r" x2="0" y2="1"><stop stop-color="#fb6e78"/><stop offset="1" stop-color="#e01238"/></linearGradient><linearGradient id="o" x2="0" y2="1"><stop stop-color="#fdb54a"/><stop offset="1" stop-color="#fb6222"/></linearGradient><linearGradient id="g" x2="0" y2="1"><stop stop-color="#4eec90"/><stop offset="1" stop-color="#02b92c"/></linearGradient><linearGradient id="b" x2="0" y2="1"><stop stop-color="#4ccaff"/><stop offset="1" stop-color="#0678f0"/></linearGradient><rect x="23" y="61" width="15" height="31" fill="url(#r)"/><rect x="40" y="45" width="15" height="47" fill="url(#o)"/><rect x="57" y="21" width="15" height="71" fill="url(#g)"/><rect x="74" y="35" width="15" height="57" fill="url(#b)"/><path d="M23 61h15v5H23zM40 45h15v5H40zM57 21h15v4H57zM74 35h15v4H74z" fill="#fff" opacity=".3"/>`,
vscode:`<path d="M74 18v28L20 83q-1 1-3 0l-6-6q-1-2 1-4z" fill="#0a70b5"/><path d="M17 39l-6 5q-1 2 0 4l60 54q3 2 5 1l-2-27-54-37q-2-1-3 0z" fill="#0989cf"/><path d="M74 18l21 10v65l-21 11q2-1 2-5V23q0-4-2-5z" fill="#14a5ee"/>`,
terminal:`<rect x="11" y="23" width="85" height="75" rx="3" fill="#b9c4c8"/><rect x="12.500" y="25" width="82" height="71" rx="2" fill="#000"/><rect x="16" y="29" width="74" height="62" fill="#252525"/><text x="21" y="47" font-size="21" font-weight="700" font-family="Liberation Mono,monospace" fill="#fff">&gt;_</text>`,
firefox:`<linearGradient id="a" x1=".8" y1="0" x2=".3" y2="1"><stop stop-color="#fff14f"/><stop offset=".35" stop-color="#ffa02c"/><stop offset=".7" stop-color="#fb3d46"/><stop offset="1" stop-color="#e6157e"/></linearGradient><linearGradient id="p" x2="0" y2="1"><stop stop-color="#b833e1"/><stop offset=".6" stop-color="#7542e5"/><stop offset="1" stop-color="#4a2d9a"/></linearGradient><path d="M66 15c5 6 10 10 13 17 2 5 5 8 5 8 1-2 0-5 0-7 7 8 12 18 12 29 0 24-19 42-43 42S10 86 10 62c0-10 3-17 7-23l1-9 7 7c3-2 8-2 8-2l5-9c1 6 3 10 5 12 3-1 8-1 10 0 2-9 6-18 13-23z" fill="url(#a)"/><circle cx="52.500" cy="60" r="20.500" fill="url(#p)"/><path d="M52 39c9 0 16 5 19 11 3 7 3 14 0 20 8-4 11-15 5-28-4-7-11-11-11-22-8 6-11 12-13 19z" fill="#ffcb32"/><path d="M14 52c8-9 17-12 26-3 3 3 7 3 12 3-2 5-6 7-11 8-5 1-9 3-9 9-4-5-5-10-18-17z" fill="#ff9a2d"/>`,
chrome:`<linearGradient id="a" x2="0" y2="1"><stop stop-color="#fff"/><stop offset="1" stop-color="#e9e9e9"/></linearGradient><rect x="13" y="21" width="80" height="80" rx="17" fill="url(#a)"/><path d="M53 61L24.800 44.700A32.500 32.500 0 0 1 81.200 44.700H53z" fill="#e04a3f"/><path d="M25 44.500A32.500 32.500 0 0 0 53 93.500L67 69 39 69z" fill="#08a05c"/><path d="M81 44.700A32.500 32.500 0 0 1 53 93.500L67 69V45z" fill="#fdcb52"/><path d="M53 45h28.200c-4-8-14-16-28-16l-1 16z" fill="#e04a3f"/><circle cx="53" cy="61" r="15.500" fill="#fff"/><circle cx="53" cy="61" r="12" fill="#2f89ee"/>`,
tv:`<linearGradient id="a" x2="0" y2="1"><stop stop-color="#3b3b3b"/><stop offset="1" stop-color="#000"/></linearGradient><circle cx="53" cy="61" r="43" fill="#242424"/><circle cx="53" cy="61" r="39" fill="url(#a)"/><g transform="translate(23.500 43.500) scale(.92)"><path fill="#fff" d="M19.600 2c.2 2-.6 3.800-1.700 5.100-1.100 1.400-2.900 2.400-4.500 2.300-.2-1.900.7-3.800 1.700-5C16.200 3 18.100 2.100 19.600 2zM25 12.200c-2 1.200-3.200 2.900-3.200 5.300 0 2.700 1.600 4.900 4.200 5.900-.6 1.900-1.500 3.600-2.600 5.200-1.100 1.600-2.300 3.200-4.100 3.200-1.800.1-2.400-1-4.500-1-2.100 0-2.700 1-4.500 1.100-1.700.1-3.100-1.700-4.200-3.300-2.300-3.300-4.100-9.400-1.700-13.500 1.200-2 3.300-3.300 5.500-3.400 1.800 0 3.400 1.200 4.500 1.200 1 0 3-1.500 5.200-1.300 2.200.1 4.100.9 5.400 2.600z"/></g><text x="50" y="72" font-size="32" font-weight="500" textLength="30" lengthAdjust="spacingAndGlyphs" fill="#fff">tv</text>`,
word:`<rect x="31" y="24" width="65" height="74" rx="3" fill="#0a419a"/><path d="M31 42h65v19H31z" fill="#0a80d6"/><path d="M31 61h65v18H31z" fill="#0a5cbd"/><path d="M34 24h59q3 0 3 3v15H31V27q0-3 3-3z" fill="#15a5ee"/><rect x="10" y="39" width="43.500" height="43" rx="3" fill="#0c58ba"/><text x="32" y="72" font-size="30" font-weight="700" text-anchor="middle" textLength="30" lengthAdjust="spacingAndGlyphs" fill="#fff">W</text>`,
keys:`<path d="M43 70l-11 28-8 2 0-8 12-26z" fill="#a5a8aa"/><path d="M44 60h12v40l-5 5-6-5z" fill="#8d9092"/><path d="M62 66l7-2 14 32-5 4-5-5z" fill="#a0a4a6"/><path d="M58 42l14-5q3 6 6 20c0 8-8 12-15 12z" fill="#c6cfd3"/><ellipse cx="52" cy="58" rx="13" ry="17" fill="#b5bcc0"/><circle cx="33" cy="51" r="20.500" fill="#fa8428" stroke="#d8dadb" stroke-width="2"/><circle cx="38" cy="38" r="6" fill="#49565f" stroke="#eee" stroke-width="2"/><path d="M41 38c0-14 8-23 17-20 7 2 10 10 10 19" fill="none" stroke="#8f9698" stroke-width="3"/><path d="M24 56l11-3 3 9-12 3z" fill="#fff"/><path d="M33 54l2-5q5-2 7 6" fill="none" stroke="#fff" stroke-width="2"/>`,
outlook,
webex:`<circle cx="53" cy="61" r="41.500" fill="#04b9e4" stroke="#fff" stroke-width="3"/><path d="M75 36c8 14 10 28 1 42-12 15-32 16-48 4-4-3-11-3-12 2 6 12 20 18 37 18 22 0 39-18 39-41 0-12-5-22-11-27-4-3-8-1-6 2z" fill="#08506f"/><circle cx="54" cy="61" r="27" fill="#6ebe4e"/><path d="M70 35c2 22-8 41-36 43-8-9-9-24-1-34 9-11 24-16 37-9z" fill="#fff"/>`,
acrobat:`<linearGradient id="a" x2="0" y2="1"><stop stop-color="#fb0519"/><stop offset="1" stop-color="#8d0208"/></linearGradient><path d="M8 13h92v91H8z" fill="url(#a)"/><path d="M52 32c6 12-12 52-22 54-10-2 6-15 22-19 14-4 33-2 30 3-5 6-30-14-33-29 0-4 0-8 3-9z" fill="none" stroke="#fff" stroke-width="2.800"/>`,
stack:`<path d="M23 22h5v70h-5z" fill="#151515"/><path d="M26 19h53v74H26z" fill="#f1f1f1"/><path d="M30 14h20q8 0 8 6l16 22H26V20h4z" fill="#dedede"/><path d="M58 20v18l20 6z" fill="#fff" stroke="#bbb"/><path d="M28 39h51v12H28z" fill="#5edbe4"/><path d="M29 42h20M54 41h4v6M62 42h14M29 46h46" stroke="#223a8e" stroke-width="2" stroke-dasharray="6 1"/><path d="M26 24h2M26 32h2M26 40h2M26 83h2M26 88h2" stroke="#fff" stroke-width="3"/><path d="M12 50h82v29H12z" fill="#fff"/><path d="M15.500 54h75v22h-75z" fill="#18191a"/><path d="M19 60.500h25M19 66h27M19 71.500h24" stroke="#b5b5b5" stroke-width="1.200"/><path d="M53 65.500h14M53 71.500h14" stroke="#268c9a" stroke-width="1.200"/><path d="M65 58h22v13H65z" fill="#9a9a9a"/><path d="M65 64h22v3H65z" fill="#1c65dc"/>`,
win1:`<path d="M7 35h92v52H7z" fill="#fcfcfc"/><path d="M7 35h92v7H7z" fill="#f2f2f2"/><path d="M7 42h16v45H7z" fill="#ededee"/><path d="M7 54h16v3H7z" fill="#cbcbcc"/><path d="M9 45h8M11 48h8M11 51h9M11 55h9M11 58h9M9 63h6M11 66h8M11 69h7M9 75h4M11 82h6" stroke="#888" stroke-width="1"/><path d="M27 43h20M27 46h15M27 49h20M27 53h12M27 57h10M27 61h11M27 65h10M27 69h12M27 73h10M27 77h11M27 81h10M27 84h14M51 43h20M51 46h14" stroke="#999" stroke-width="1"/><path d="M24.500 45v2M24.500 55v2M24.500 62v2M24.500 70v2M24.500 81v2" stroke="#29a9e8" stroke-width="2"/><path d="M49 42v45M72 42v45" stroke="#ddd"/><circle cx="9.500" cy="78" r="1" fill="#f33"/><circle cx="9.500" cy="81" r="1" fill="#fa3"/><circle cx="9.500" cy="86" r="1" fill="#3c5"/><path d="M27 39h30" stroke="#bbb" stroke-dasharray="3 2"/><g transform="translate(62.200 67.300) scale(.375)">${finder}</g>`,
win2:`<path d="M7 35h92v52H7z" fill="#fafafa"/><path d="M7 35h92v6H7z" fill="#d8d8d8"/><path d="M7 41h92v19H7z" fill="#0c8acb"/><path d="M7 60h92v7H7zM7 80h92v7H7z" fill="#e6e6e6"/><circle cx="10.500" cy="38" r="1.700" fill="#e94b3f"/><circle cx="16" cy="38" r="1.700" fill="#c38a1d"/><circle cx="21" cy="38" r="1.700" fill="#29b23c"/><rect x="10.500" y="45" width="7" height="7" fill="none" stroke="#9fd6f2"/><g font-size="4.500"><text x="43" y="40" font-size="4" fill="#444" textLength="21">97 Reminders</text><g fill="#fff"><text x="21" y="48" textLength="60" lengthAdjust="spacingAndGlyphs" font-weight="600">Weekly Platform Health Meeting</text><text x="21" y="52.500" font-size="3.500">Webex</text><text x="21" y="56.500" font-size="3.500">Overdue (Yesterday)</text></g><g fill="#555" font-size="4"><text x="20" y="65.500" textLength="46" lengthAdjust="spacingAndGlyphs">Weekly Platform Health Meeting</text><text x="20" y="71.500" textLength="49" lengthAdjust="spacingAndGlyphs">DevOps Domain - 2021 - Updated</text><text x="20" y="77.500" textLength="20" lengthAdjust="spacingAndGlyphs">Team Meeting</text></g><g fill="#b02a35" font-size="4"><text x="83" y="65.500" textLength="13" lengthAdjust="spacingAndGlyphs">Overdue</text><text x="83" y="71.500" textLength="13" lengthAdjust="spacingAndGlyphs">Overdue</text></g></g><path d="M14 62h3v3h-3zM14 68h3v3h-3zM14 74h3v3h-3z" fill="none" stroke="#777" stroke-width=".7"/><g transform="translate(61 67.300) scale(.375)">${outlook}</g>`,
trash:`<linearGradient id="a"><stop stop-color="#c9cbcc"/><stop offset=".3" stop-color="#ececeb"/><stop offset=".8" stop-color="#dedcda"/><stop offset="1" stop-color="#c5c7c9"/></linearGradient><path d="M23 24l9-7 7 2 3-5 5 3 6-2 5 6 6-7 7 6 6 2 6 6-4 9H25z" fill="#e6e6e6"/><path d="M28 23l9-4 5 13-7 2zM46 19l11-1-6 15zM62 24l9-6 5 9-7 7z" fill="#727476"/><path d="M42 24l6-4 4 6-5 3z" fill="#16c9b4"/><path d="M60 26l7-3 3 7-7 3z" fill="#c4502b"/><path d="M66 21l6 2-4 5z" fill="#2b6fc4"/><path d="M18 27q34 14 70 0l-7 70q-1 8-27 8t-26-8z" fill="url(#a)"/><path d="M18 26q34 14 70 0M30 42l4 50M74 40l-4 40M46 44l10 22-16 30" fill="none" stroke="#fff" stroke-width="1.600" opacity=".7"/><path d="M18 26q0-4 5-5M83 21q5 2 5 5" fill="none" stroke="#f5f5f5" stroke-width="2"/>`
};
define('dock-item',`<style>:host{display:block;width:106px;height:130px;flex:none}svg{display:block;overflow:visible;filter:drop-shadow(0 1px 1px #0004);font-family:Inter,"Liberation Sans",sans-serif}</style><svg width="106" height="130" viewBox="0 0 106 130"></svg>`,
 (h,r)=>{r.querySelector('svg').innerHTML=D[h.getAttribute('app')]+(h.hasAttribute('open')?'<circle cx="52.500" cy="122" r="4.200" fill="#000"/>':'');});
define('mac-dock',`<style>
:host{display:flex;width:2868px;height:130px;margin-left:246px;box-sizing:border-box;padding-left:8px;border-radius:12px 12px 0 0;background:linear-gradient(#485662,#475a6d);position:relative;box-shadow:0 0 70px rgba(0,0,0,.2)}
.s{flex:none;height:94px;margin-top:18px;width:2px;background:#0e2033}
</style>
<dock-item app="finder" open></dock-item><dock-item app="siri"></dock-item><dock-item app="safari"></dock-item><dock-item app="rocket"></dock-item><dock-item app="cal"></dock-item><dock-item app="notes" open></dock-item><dock-item app="facetime"></dock-item><dock-item app="pages"></dock-item><dock-item app="reminders"></dock-item><dock-item app="appstore" open></dock-item><dock-item app="q"></dock-item><dock-item app="numbers" open></dock-item><dock-item app="vscode" open></dock-item><dock-item app="terminal" open></dock-item><dock-item app="firefox" open></dock-item><dock-item app="chrome" open></dock-item><dock-item app="tv" open></dock-item>
<div class="s" style="margin-left:24px;margin-right:21px"></div>
<dock-item app="word" open></dock-item><dock-item app="keys" open></dock-item><dock-item app="outlook" open></dock-item><dock-item app="webex" open></dock-item><dock-item app="acrobat" open></dock-item>
<div class="s" style="margin-left:25px;margin-right:22px"></div>
<dock-item app="stack"></dock-item><dock-item app="win1"></dock-item><dock-item app="win2"></dock-item><dock-item app="trash"></dock-item>`);

define('mac-desktop',`<style>
:host{display:flex;flex-direction:column;width:3360px;height:2100px;background:linear-gradient(#03101f 94%,#050d16 94%,#04182b);overflow:hidden}
.win{margin-top:2px;height:1924px;flex:none}
</style><mac-menubar></mac-menubar><div class="win"><chrome-tabstrip></chrome-tabstrip><chrome-toolbar></chrome-toolbar><wiki-page></wiki-page></div><mac-dock></mac-dock>`);
</script>
</body>
</html>
